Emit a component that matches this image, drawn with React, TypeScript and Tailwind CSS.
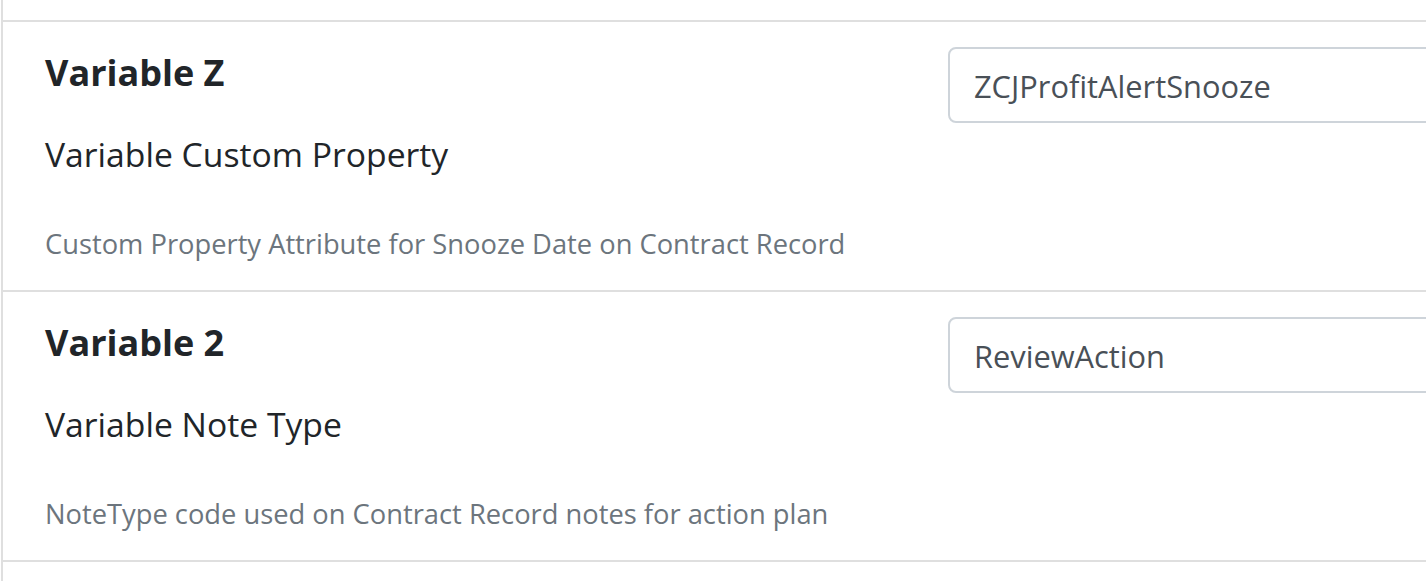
import React from "react";

const rows = [
  {
    title: "Variable Z",
    subtitle: "Variable Custom Property",
    desc: "Custom Property Attribute for Snooze Date on Contract Record",
    value: "ZCJProfitAlertSnooze",
  },
  {
    title: "Variable 2",
    subtitle: "Variable Note Type",
    desc: "NoteType code used on Contract Record notes for action plan",
    value: "ReviewAction",
  },
];

export default function App() {
  return (
    <div
      className="w-[1426px] h-[581px] overflow-hidden bg-white pl-px"
      style={{ fontFamily: '"Open Sans", "Noto Sans", "Liberation Sans", sans-serif' }}
    >
      <div className="h-full border-l-2 border-[#dfdfdf] pt-[20px]">
        {rows.map((r) => (
          <div key={r.title} className="flex h-[270px] border-t-2 border-[#dfdfdf]">
            <div className="w-[945px] shrink-0 pl-[42px] pt-[27px]">
              <h5 className="text-[36px] leading-[48px] font-bold text-[#212529]">{r.title}</h5>
              <div className="mt-[35px] text-[33.7px] leading-[44px] text-[#212529]">{r.subtitle}</div>
              <div className="mt-[48px] text-[27.3px] leading-[40px] text-[#6c757d]">{r.desc}</div>
            </div>
            <div className="pt-[25px]">
              <div className="flex h-[76px] w-[700px] items-center rounded-[8px] border-2 border-[#ced4da] px-[24px] pt-[2px] text-[30.8px] text-[#495057]">
                {r.value}
              </div>
            </div>
          </div>
        ))}
        <div className="border-t-2 border-[#dfdfdf]" />
      </div>
    </div>
  );
}
